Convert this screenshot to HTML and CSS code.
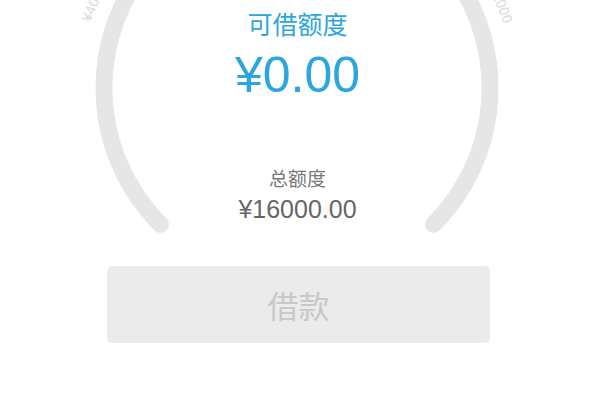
FILE: index.html
```html
<!DOCTYPE html>
<html lang="zh">
<head>
  <meta charset="UTF-8">
  <meta name="viewport" content="width=device-width, initial-scale=1.0">
  <title>借款</title>
  <link rel="stylesheet" href="styles.css">
</head>
<body>
  <div class="page">
    <!-- quota gauge -->
    <div class="gauge">
      <svg class="gauge-ring" width="600" height="258" viewBox="0 0 600 258">
        <defs>
          <path id="labelRing" d="M81 88 A216 216 0 1 1 513 88 A216 216 0 1 1 81 88"/>
        </defs>
        <path class="ring-track" d="M160.53 224.47 A193 193 0 1 1 433.47 224.47"/>
        <text class="ring-label"><textPath href="#labelRing" startOffset="86" text-anchor="middle">¥4000</textPath></text>
        <text class="ring-label"><textPath href="#labelRing" startOffset="590" text-anchor="middle">¥12000</textPath></text>
      </svg>
      <div class="available-title">可借额度</div>
      <div class="available-amount">¥0.00</div>
      <div class="total-title">总额度</div>
      <div class="total-amount">¥16000.00</div>
    </div>
    <button class="borrow-btn" disabled>借款</button>
  </div>
</body>
</html>
```

FILE: styles.css
```css
body {
  margin: 0;
  background: #fff;
  font-family: "Liberation Sans", "Noto Sans CJK SC", sans-serif;
}
.page {
  width: 600px;
  height: 400px;
  overflow: hidden;
}
.gauge {
  position: relative;
  height: 266px;
  padding-right: 5px;
  display: flex;
  flex-direction: column;
  align-items: center;
  box-sizing: border-box;
}
.gauge-ring {
  position: absolute;
  left: 0;
  top: 0;
}
.ring-track {
  fill: none;
  stroke: #e6e6e6;
  stroke-width: 17;
  stroke-linecap: round;
}
.ring-label {
  fill: #d9d9d9;
  font-size: 14px;
}
.available-title,
.available-amount,
.total-title,
.total-amount {
  position: relative;
}
.available-title {
  margin-top: 10px;
  font-size: 25px;
  line-height: 30px;
  color: #2ba6de;
}
.available-amount {
  margin-top: 7px;
  font-size: 50px;
  line-height: 56px;
  color: #2ba6de;
}
.total-title {
  margin-top: 65px;
  font-size: 19px;
  line-height: 24px;
  color: #777;
}
.total-amount {
  margin-top: 2px;
  font-size: 25px;
  line-height: 30px;
  color: #666;
}
.borrow-btn {
  display: block;
  width: 383px;
  height: 77px;
  margin-left: 107px;
  border: none;
  border-radius: 5px;
  background: #ebebeb;
  color: #c8c8c8;
  font-family: "Liberation Sans", "Noto Sans CJK SC", sans-serif;
  font-size: 31px;
  padding: 0;
}
```
